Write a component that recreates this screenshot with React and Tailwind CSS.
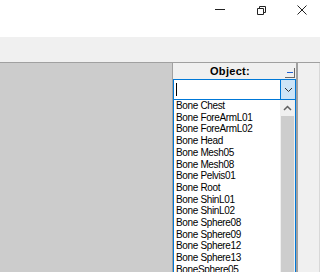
import React from 'react';

const items = [
  'Bone Chest',
  'Bone ForeArmL01',
  'Bone ForeArmL02',
  'Bone Head',
  'Bone Mesh05',
  'Bone Mesh08',
  'Bone Pelvis01',
  'Bone Root',
  'Bone ShinL01',
  'Bone ShinL02',
  'Bone Sphere08',
  'Bone Sphere09',
  'Bone Sphere12',
  'Bone Sphere13',
  'BoneSphere05',
];

const TitleBar = () => (
  <div className="h-[37px] bg-white flex items-start shrink-0">
    <div className="flex-1" />
    {/* minimize */}
    <svg width="12" height="12" viewBox="0 0 12 12" className="mt-[4px] mr-[29px]">
      <path d="M1 5.5H11" stroke="#222" strokeWidth="1" />
    </svg>
    {/* restore */}
    <svg width="12" height="12" viewBox="0 0 12 12" className="mt-[4px] mr-[29px]">
      <path d="M2.5 4.5H8.5V10.5H2.5Z M4.5 4.5V2.5H10.5V8.5H8.5" stroke="#222" strokeWidth="1" fill="none" />
    </svg>
    {/* close */}
    <svg width="12" height="12" viewBox="0 0 12 12" className="mt-[4px] mr-[12px]">
      <path d="M1.5 1.5L10.5 10.5M10.5 1.5L1.5 10.5" stroke="#222" strokeWidth="1" />
    </svg>
  </div>
);

const ObjectPanel = () => (
  <div className="w-[126px] flex flex-col border-l border-r-2 border-[#a0a0a0] bg-[#f0f0f0]">
    {/* header */}
    <div className="h-[16px] flex items-center">
      <div className="flex-1 text-center font-bold text-[11px] tracking-[0.3px] leading-none text-black pl-[2px]">
        Object:
      </div>
      <div className="w-[10px] h-[10px] mr-[1px] mt-[4px] bg-[#f0f0f0] border-r border-b border-[#696969] flex items-center justify-center">
        <div className="w-[6px] h-[1px] bg-[#2060d0]" />
      </div>
    </div>
    {/* combo */}
    <div className="h-[21px] flex border border-[#0078d7] bg-white">
      <div className="flex-1 flex items-center pl-[2px]">
        <div className="w-[1px] h-[13px] bg-black" />
      </div>
      <div className="w-[15px] bg-[#cce4f7] border-l border-[#0078d7] flex items-center justify-center">
        <svg width="9" height="6" viewBox="0 0 9 6">
          <path d="M1 1L4.5 4.5L8 1" stroke="#333" strokeWidth="1" fill="none" />
        </svg>
      </div>
    </div>
    {/* list */}
    <div className="flex-1 flex border-l border-r border-[#0078d7] bg-white overflow-hidden">
      <div className="flex-1 pl-[2px] font-['Liberation_Sans',Arial,sans-serif] text-[10px] leading-[11.7px] tracking-[-0.35px] text-black whitespace-nowrap overflow-hidden">
        {items.map((it) => (
          <div key={it}>{it}</div>
        ))}
      </div>
      <div className="w-[15px] flex flex-col bg-[#f0f0f0]">
        <div className="h-[16px] flex items-center justify-center">
          <svg width="9" height="6" viewBox="0 0 9 6">
            <path d="M1 5L4.5 1.5L8 5" stroke="#606060" strokeWidth="1.5" fill="none" />
          </svg>
        </div>
        <div className="flex-1 mx-[1px] bg-[#cdcdcd]" />
      </div>
    </div>
  </div>
);

export default function App() {
  return (
    <div className="w-[320px] h-[272px] flex flex-col overflow-hidden font-['Liberation_Sans',Arial,sans-serif]">
      <TitleBar />
      <div className="h-[26px] bg-[#f0f0f0] border-b border-[#a0a0a0] shrink-0" />
      <div className="flex-1 flex min-h-0">
        <div className="w-[172px] bg-[#cccccc]" />
        <ObjectPanel />
        <div className="flex-1 bg-[#f0f0f0] border-r border-[#d8d8d8]" />
      </div>
    </div>
  );
}
